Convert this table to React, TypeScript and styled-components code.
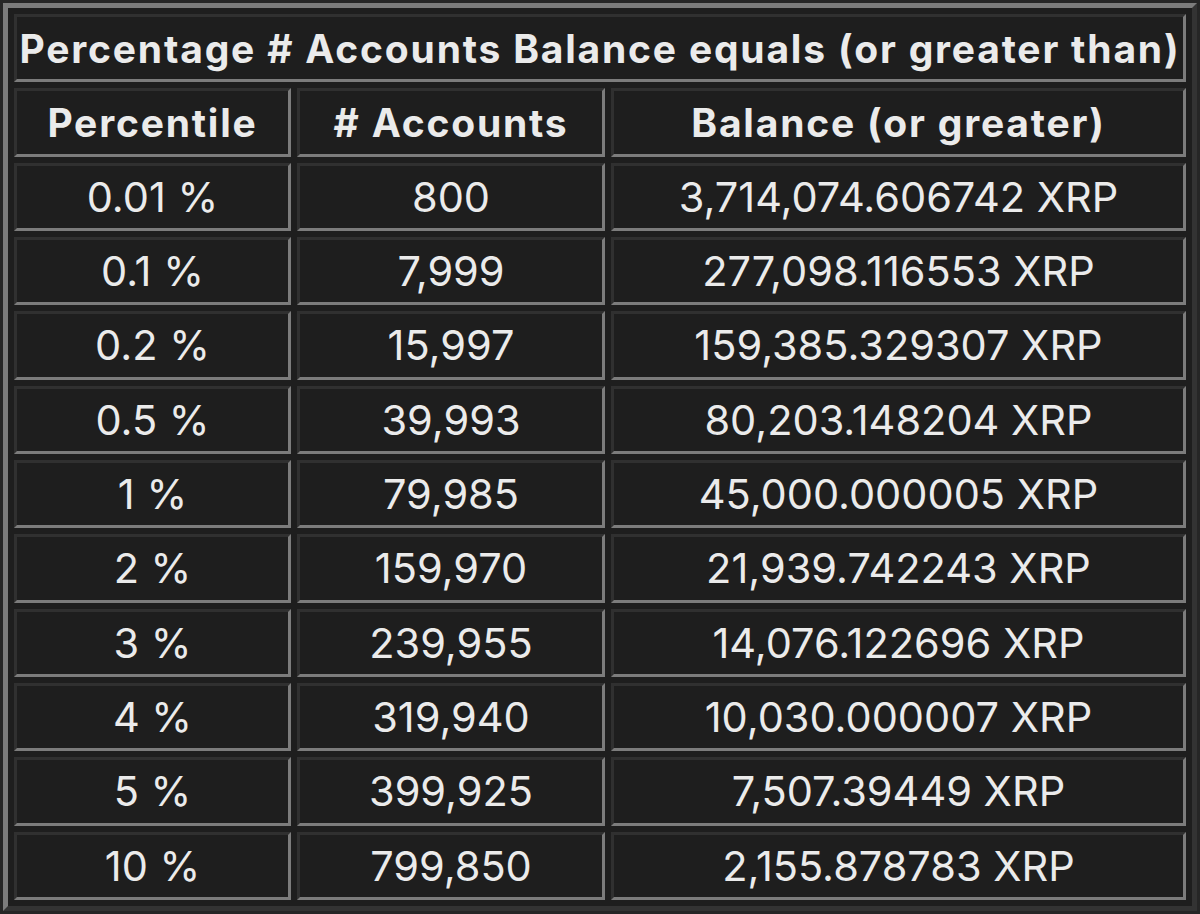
import React from "react";
import styled, { createGlobalStyle } from "styled-components";

const Global = createGlobalStyle`
  html, body { margin: 0; padding: 0; background: #262626; }
  body { font-family: Inter, "Noto Sans", "Liberation Sans", sans-serif; }
  #root { padding: 3px; }
`;

const Frame = styled.div`
  box-sizing: border-box;
  width: 1194px;
  border: 5px solid;
  border-color: #7c7c7c #333333 #333333 #7c7c7c;
  background: #1e1e1e;
  padding: 6px;
`;

const Grid = styled.div`
  display: grid;
  grid-template-columns: 277px 308px 1fr;
  grid-auto-rows: 68.33px;
  gap: 6px;
`;

const Cell = styled.div<{ $head?: boolean; $span?: boolean }>`
  box-sizing: border-box;
  border: 3px solid;
  border-color: #303030 #7c7c7c #7c7c7c #303030;
  background: #1e1e1e;
  color: #ebebeb;
  display: flex;
  align-items: center;
  justify-content: center;
  white-space: nowrap;
  font-size: ${(p) => (p.$head ? "39px" : "41.5px")};
  font-weight: ${(p) => (p.$head ? 700 : 400)};
  letter-spacing: ${(p) => (p.$head ? "1.8px" : "0")};
  grid-column: ${(p) => (p.$span ? "1 / -1" : "auto")};
`;

const rows: [string, string, string][] = [
  ["0.01 %", "800", "3,714,074.606742 XRP"],
  ["0.1 %", "7,999", "277,098.116553 XRP"],
  ["0.2 %", "15,997", "159,385.329307 XRP"],
  ["0.5 %", "39,993", "80,203.148204 XRP"],
  ["1 %", "79,985", "45,000.000005 XRP"],
  ["2 %", "159,970", "21,939.742243 XRP"],
  ["3 %", "239,955", "14,076.122696 XRP"],
  ["4 %", "319,940", "10,030.000007 XRP"],
  ["5 %", "399,925", "7,507.39449 XRP"],
  ["10 %", "799,850", "2,155.878783 XRP"],
];

export default function App() {
  return (
    <>
      <Global />
      <Frame>
        <Grid>
          <Cell $head $span>Percentage # Accounts Balance equals (or greater than)</Cell>
          <Cell $head>Percentile</Cell>
          <Cell $head># Accounts</Cell>
          <Cell $head>Balance (or greater)</Cell>
          {rows.map((r) => (
            <React.Fragment key={r[0]}>
              <Cell>{r[0]}</Cell>
              <Cell>{r[1]}</Cell>
              <Cell>{r[2]}</Cell>
            </React.Fragment>
          ))}
        </Grid>
      </Frame>
    </>
  );
}
